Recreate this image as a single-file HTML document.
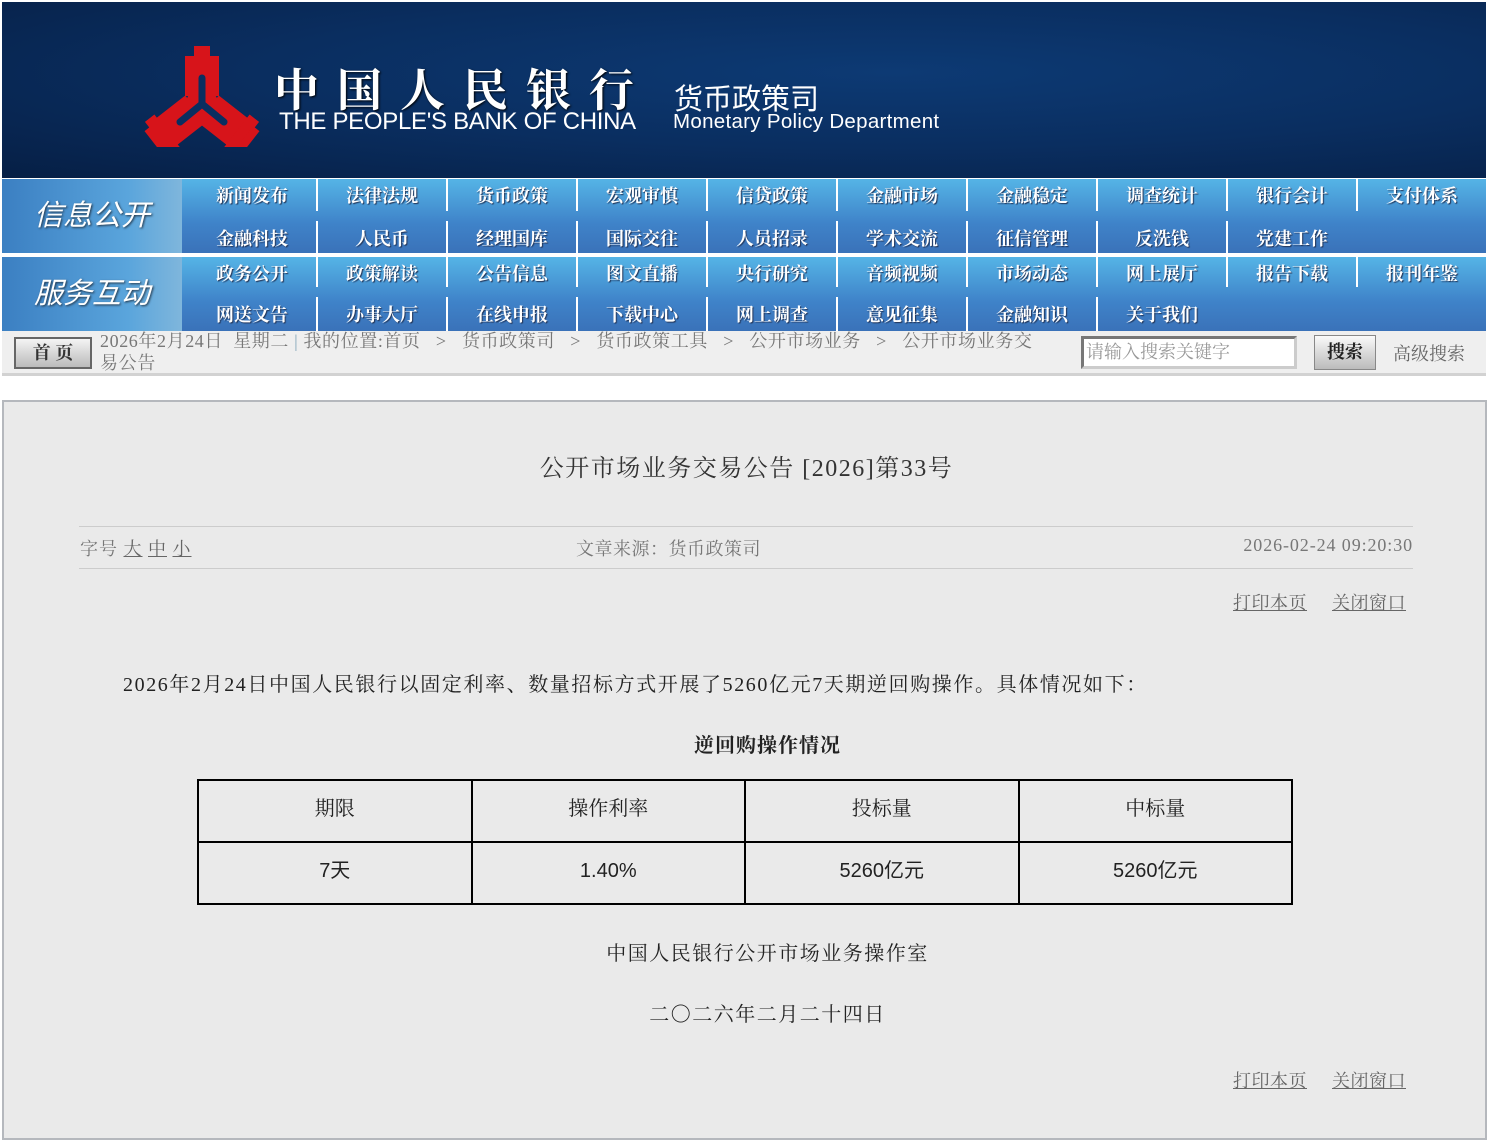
<!DOCTYPE html>
<html><head><meta charset="utf-8">
<style>
*{margin:0;padding:0;box-sizing:border-box}
body{width:1489px;height:1130px;background:#fff;font-family:"Liberation Serif","Noto Serif CJK SC",serif;position:relative;overflow:hidden}
.hdr{position:absolute;left:2px;top:2px;width:1484px;height:176px;background:radial-gradient(ellipse at 60% 40%,#0d3a74 0%,#0a2e60 50%,#061f45 100%)}
.abs{position:absolute}
.nav{position:absolute;left:2px;width:1484px;height:74px;background:linear-gradient(#55b4e6,#3f83c9 60%,#3a72b9)}
.side{position:absolute;left:0;top:0;width:180px;height:74px;background:linear-gradient(90deg,#3b7fc2,#5aa5dc 70%,#7fb6dc);color:#fff;font-style:italic;font-size:29px;text-align:center;line-height:74px;font-family:"Liberation Sans","Noto Sans CJK SC",sans-serif;text-shadow:1px 1px 2px #234}
.it{position:absolute;width:130px;text-align:center;color:#fff;font-weight:bold;font-size:18px;text-shadow:1px 1px 1px #235}
.sep{position:absolute;width:2px;background:#fff}
.crumb{position:absolute;left:2px;top:331px;width:1484px;height:45px;background:#efefef;border-bottom:3px solid #d2d2d2;color:#777;font-size:18px}
.box{position:absolute;left:2px;top:400px;width:1485px;height:740px;background:#eaeaea;border:2px solid #b5b8bd}
.g{color:#666}
a{color:#666;text-decoration:underline}
table{border-collapse:collapse;position:absolute;left:193px;top:377px;width:1096px}
td{border:2px solid #000;height:62px;text-align:center;font-size:20px;color:#222;width:25%;line-height:24px;padding-bottom:4px}
</style></head><body>
<div class="hdr">
<svg class="abs" style="left:140px;top:40px" width="120" height="105" viewBox="0 0 120 105">
<g fill="#d7141a">
<g transform="translate(60,62)">
<rect x="-17" y="-48" width="34" height="40"/><rect x="-8" y="-58" width="16" height="14"/>
</g>
<g transform="translate(60,62) rotate(128)">
<rect x="-17" y="-46" width="34" height="38"/><rect x="-21" y="-56" width="42" height="12"/><rect x="-14" y="-62" width="28" height="8"/>
</g>
<g transform="translate(60,62) rotate(232)">
<rect x="-17" y="-46" width="34" height="38"/><rect x="-21" y="-56" width="42" height="12"/><rect x="-14" y="-62" width="28" height="8"/>
</g>
<circle cx="60" cy="62" r="16"/>
</g>
<g stroke="#0a2e60" stroke-width="7" stroke-linecap="round" fill="none">
<line x1="60" y1="62" x2="60" y2="36"/>
<line x1="60" y1="62" x2="82" y2="80"/>
<line x1="60" y1="62" x2="38" y2="80"/>
</g>
</svg>
<div class="abs" style="left:272px;top:52px;color:#fff;font-size:45px;font-weight:bold;letter-spacing:18px;font-family:'Liberation Serif','Noto Serif CJK SC',serif;text-shadow:1px 1px 2px #000">中国人民银行</div>
<div class="abs" style="left:277px;top:106px;color:#fff;font-size:24px;font-family:'Liberation Sans',sans-serif;letter-spacing:-0.3px">THE PEOPLE'S BANK OF CHINA</div>
<div class="abs" style="left:672px;top:74px;color:#fff;font-size:29px;font-family:'Liberation Sans','Noto Sans CJK SC',sans-serif">货币政策司</div>
<div class="abs" style="left:671px;top:108px;color:#fff;font-size:20.5px;font-family:'Liberation Sans',sans-serif;letter-spacing:0.3px">Monetary Policy Department</div>
</div>

<div class="nav" style="top:179px">
<div class="side">信息公开</div>
<div class="it" style="left:185px;top:3px">新闻发布</div><div class="it" style="left:315px;top:3px">法律法规</div><div class="it" style="left:445px;top:3px">货币政策</div><div class="it" style="left:575px;top:3px">宏观审慎</div><div class="it" style="left:705px;top:3px">信贷政策</div><div class="it" style="left:835px;top:3px">金融市场</div><div class="it" style="left:965px;top:3px">金融稳定</div><div class="it" style="left:1095px;top:3px">调查统计</div><div class="it" style="left:1225px;top:3px">银行会计</div><div class="it" style="left:1355px;top:3px">支付体系</div>
<div class="it" style="left:185px;top:46px">金融科技</div><div class="it" style="left:315px;top:46px">人民币</div><div class="it" style="left:445px;top:46px">经理国库</div><div class="it" style="left:575px;top:46px">国际交往</div><div class="it" style="left:705px;top:46px">人员招录</div><div class="it" style="left:835px;top:46px">学术交流</div><div class="it" style="left:965px;top:46px">征信管理</div><div class="it" style="left:1095px;top:46px">反洗钱</div><div class="it" style="left:1225px;top:46px">党建工作</div>
</div>
<div class="nav" style="top:257px">
<div class="side">服务互动</div>
<div class="it" style="left:185px;top:3px">政务公开</div><div class="it" style="left:315px;top:3px">政策解读</div><div class="it" style="left:445px;top:3px">公告信息</div><div class="it" style="left:575px;top:3px">图文直播</div><div class="it" style="left:705px;top:3px">央行研究</div><div class="it" style="left:835px;top:3px">音频视频</div><div class="it" style="left:965px;top:3px">市场动态</div><div class="it" style="left:1095px;top:3px">网上展厅</div><div class="it" style="left:1225px;top:3px">报告下载</div><div class="it" style="left:1355px;top:3px">报刊年鉴</div>
<div class="it" style="left:185px;top:44px">网送文告</div><div class="it" style="left:315px;top:44px">办事大厅</div><div class="it" style="left:445px;top:44px">在线申报</div><div class="it" style="left:575px;top:44px">下载中心</div><div class="it" style="left:705px;top:44px">网上调查</div><div class="it" style="left:835px;top:44px">意见征集</div><div class="it" style="left:965px;top:44px">金融知识</div><div class="it" style="left:1095px;top:44px">关于我们</div>
</div>
<div class="sep" style="left:316px;top:179px;height:32px"></div><div class="sep" style="left:446px;top:179px;height:32px"></div><div class="sep" style="left:576px;top:179px;height:32px"></div><div class="sep" style="left:706px;top:179px;height:32px"></div><div class="sep" style="left:836px;top:179px;height:32px"></div><div class="sep" style="left:966px;top:179px;height:32px"></div><div class="sep" style="left:1096px;top:179px;height:32px"></div><div class="sep" style="left:1226px;top:179px;height:32px"></div><div class="sep" style="left:1356px;top:179px;height:32px"></div>
<div class="sep" style="left:316px;top:221px;height:32px"></div><div class="sep" style="left:446px;top:221px;height:32px"></div><div class="sep" style="left:576px;top:221px;height:32px"></div><div class="sep" style="left:706px;top:221px;height:32px"></div><div class="sep" style="left:836px;top:221px;height:32px"></div><div class="sep" style="left:966px;top:221px;height:32px"></div><div class="sep" style="left:1096px;top:221px;height:32px"></div><div class="sep" style="left:1226px;top:221px;height:32px"></div>
<div class="sep" style="left:316px;top:257px;height:30px"></div><div class="sep" style="left:446px;top:257px;height:30px"></div><div class="sep" style="left:576px;top:257px;height:30px"></div><div class="sep" style="left:706px;top:257px;height:30px"></div><div class="sep" style="left:836px;top:257px;height:30px"></div><div class="sep" style="left:966px;top:257px;height:30px"></div><div class="sep" style="left:1096px;top:257px;height:30px"></div><div class="sep" style="left:1226px;top:257px;height:30px"></div><div class="sep" style="left:1356px;top:257px;height:30px"></div>
<div class="sep" style="left:316px;top:297px;height:34px"></div><div class="sep" style="left:446px;top:297px;height:34px"></div><div class="sep" style="left:576px;top:297px;height:34px"></div><div class="sep" style="left:706px;top:297px;height:34px"></div><div class="sep" style="left:836px;top:297px;height:34px"></div><div class="sep" style="left:966px;top:297px;height:34px"></div><div class="sep" style="left:1096px;top:297px;height:34px"></div>

<div class="crumb">
<div class="abs" style="left:12px;top:6px;width:78px;height:32px;border:2px solid #666;background:linear-gradient(#f4f4f4,#bbb);color:#333;font-weight:bold;font-size:18px;text-align:center;line-height:28px">首 页</div>
<div class="abs" style="left:98px;top:-1px;line-height:22px;letter-spacing:0.6px;white-space:nowrap">2026年2月24日&nbsp; 星期二 <span style="color:#8ab">|</span> 我的位置:首页 &nbsp; &gt; &nbsp; 货币政策司 &nbsp; &gt; &nbsp; 货币政策工具 &nbsp; &gt; &nbsp; 公开市场业务 &nbsp; &gt; &nbsp; 公开市场业务交<br>易公告</div>
<div class="abs" style="left:1079px;top:5px;width:216px;height:33px;background:#fff;border:3px solid #777;border-right-color:#ccc;border-bottom-color:#ccc;color:#999;font-size:18px;line-height:27px;padding-left:2px">请输入搜索关键字</div>
<div class="abs" style="left:1312px;top:4px;width:62px;height:35px;border:1px solid #888;background:linear-gradient(#fafafa,#bbb);color:#222;font-weight:bold;font-size:18px;text-align:center;line-height:33px">搜索</div>
<div class="abs" style="left:1391px;top:9px;font-size:18px;color:#666">高级搜索</div>
</div>

<div class="box">
<div class="abs" style="left:0;width:1485px;top:46px;text-align:center;font-size:24px;color:#333;letter-spacing:1.5px">公开市场业务交易公告 [2026]第33号</div>
<div class="abs" style="left:75px;top:124px;width:1334px;height:43px;border-top:1px solid #ccc;border-bottom:1px solid #ccc;font-size:18px;color:#777">
<div class="abs" style="left:1px;top:8px;letter-spacing:1px">字号 <a>大</a> <a>中</a> <a>小</a></div>
<div class="abs" style="left:497px;top:8px;letter-spacing:0.5px">文章来源：货币政策司</div>
<div class="abs" style="right:0;top:8px;letter-spacing:0.9px">2026-02-24 09:20:30</div>
</div>
<div class="abs g" style="left:1229px;top:187px;font-size:18px;letter-spacing:0.5px"><a>打印本页</a>&nbsp;&nbsp;&nbsp;&nbsp; <a>关闭窗口</a></div>
<div class="abs" style="left:119px;top:266px;font-size:20px;color:#222;letter-spacing:1.6px">2026年2月24日中国人民银行以固定利率、数量招标方式开展了5260亿元7天期逆回购操作。具体情况如下：</div>
<div class="abs" style="left:0;width:1527px;top:327px;text-align:center;font-size:20px;font-weight:bold;color:#222;letter-spacing:1px">逆回购操作情况</div>
<table><tr><td>期限</td><td>操作利率</td><td>投标量</td><td>中标量</td></tr>
<tr><td style="font-family:'Liberation Sans','Noto Sans CJK SC',sans-serif">7天</td><td style="font-family:'Liberation Sans','Noto Sans CJK SC',sans-serif">1.40%</td><td style="font-family:'Liberation Sans','Noto Sans CJK SC',sans-serif">5260亿元</td><td style="font-family:'Liberation Sans','Noto Sans CJK SC',sans-serif">5260亿元</td></tr></table>
<div class="abs" style="left:0;width:1527px;top:535px;text-align:center;font-size:20px;color:#222;letter-spacing:1.5px">中国人民银行公开市场业务操作室</div>
<div class="abs" style="left:0;width:1527px;top:596px;text-align:center;font-size:20px;color:#222;letter-spacing:1.5px">二〇二六年二月二十四日</div>
<div class="abs g" style="left:1229px;top:665px;font-size:18px;letter-spacing:0.5px"><a>打印本页</a>&nbsp;&nbsp;&nbsp;&nbsp; <a>关闭窗口</a></div>
</div>
</body></html>
